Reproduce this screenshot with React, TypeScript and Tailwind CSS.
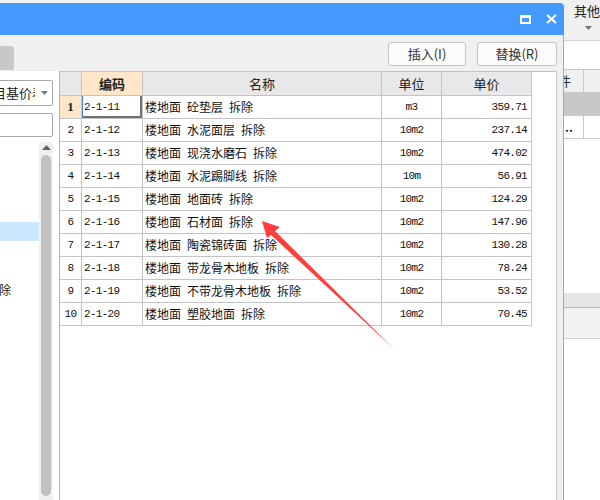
import React from 'react';

const rows = [
  ['2-1-11', '楼地面 砼垫层 拆除', 'm3', '359.71'],
  ['2-1-12', '楼地面 水泥面层 拆除', '10m2', '237.14'],
  ['2-1-13', '楼地面 现浇水磨石 拆除', '10m2', '474.02'],
  ['2-1-14', '楼地面 水泥踢脚线 拆除', '10m', '56.91'],
  ['2-1-15', '楼地面 地面砖 拆除', '10m2', '124.29'],
  ['2-1-16', '楼地面 石材面 拆除', '10m2', '147.96'],
  ['2-1-17', '楼地面 陶瓷锦砖面 拆除', '10m2', '130.28'],
  ['2-1-18', '楼地面 带龙骨木地板 拆除', '10m2', '78.24'],
  ['2-1-19', '楼地面 不带龙骨木地板 拆除', '10m2', '53.52'],
  ['2-1-20', '楼地面 塑胶地面 拆除', '10m2', '70.45'],
];

const cols = 'grid grid-cols-[22px_61px_239px_60px_90px] w-[472px]';
const cell = 'border-r border-b border-[#c4c4c4] flex items-center overflow-hidden whitespace-nowrap';
const mono = "font-['Liberation_Mono',monospace] text-[11px] tracking-[-0.7px] text-[#111]";

function Caret() {
  return (
    <svg width="7" height="4" viewBox="0 0 7 4">
      <path d="M0 0h7L3.5 4z" fill="#777" />
    </svg>
  );
}

export default function App() {
  return (
    <div className="relative w-[600px] h-[500px] overflow-hidden flex bg-[#f0f0f0] font-['Noto_Sans_CJK_SC',sans-serif] text-[#222]">
      {/* Dialog */}
      <div className="w-[567px] flex flex-col">
        <div className="h-[3px] bg-[#f0f0f0]" />
        {/* Title bar */}
        <div className="h-[32px] bg-[#4499ff] rounded-tr-[4px] flex justify-end items-center gap-[15px] pr-[7px]">
          <svg width="11" height="9" viewBox="0 0 11 9">
            <rect x="1" y="1.5" width="9" height="6.5" fill="none" stroke="#fff" strokeWidth="2" />
            <rect x="0" y="0" width="11" height="3" fill="#fff" />
          </svg>
          <svg width="11" height="10" viewBox="0 0 11 10">
            <path d="M1 1l9 8M10 1l-9 8" stroke="#fff" strokeWidth="2.2" />
          </svg>
        </div>

        {/* Body */}
        <div className="flex-1 flex bg-[#f0f0f0] border-r border-[#a8a8a8]">
          <div className="w-[557px] flex flex-col">
            {/* Toolbar */}
            <div className="h-[36px] flex">
              <div className="w-[14px] h-[24px] mt-[11px] bg-[#c8c8c8] rounded-tr-[3px]" />
              <div className="ml-auto flex gap-[11px] pt-[7px]">
                <button className="w-[78px] h-[24px] bg-[#fbfbfb] border border-[#c4c4c4] rounded-[3px] text-[13px] text-[#333]">
                  插入(I)
                </button>
                <button className="w-[80px] h-[24px] bg-[#fbfbfb] border border-[#c4c4c4] rounded-[3px] text-[13px] text-[#333]">
                  替换(R)
                </button>
              </div>
            </div>

            {/* Main */}
            <div className="flex-1 flex min-h-0">
              {/* Left panel */}
              <div className="w-[60px] bg-white border-r border-[#b4b4b4] flex flex-col pt-[9px] overflow-hidden">
                <div className="-ml-[10px] w-[63px] h-[26px] shrink-0 border border-[#a8a8a8] rounded-[2px] flex items-center">
                  <div className="w-[44px] overflow-hidden whitespace-nowrap text-[13px] leading-[24px]">
                    <span className="ml-[2px]">目基价表</span>
                  </div>
                  <div className="flex-1 flex justify-center pl-[2px]">
                    <Caret />
                  </div>
                </div>
                <div className="-ml-[10px] w-[63px] h-[24px] shrink-0 mt-[7px] border border-[#a8a8a8] rounded-[2px]" />
                <div className="flex-1 flex mt-[5px]">
                  <div className="w-[39px] flex flex-col overflow-hidden">
                    <div className="h-[19px] mt-[80px] bg-[#cce8ff]" />
                    <div className="h-[20px] mt-[39px] flex items-center text-[12px] whitespace-nowrap">
                      <span className="-ml-[13px]">拆除</span>
                    </div>
                  </div>
                  <div className="w-[14px] bg-[#f0f0f0] flex flex-col items-center">
                    <svg width="9" height="5" viewBox="0 0 9 5" className="mt-[3px]">
                      <path d="M0 5h9L4.5 0z" fill="#606060" />
                    </svg>
                    <div className="w-[10px] flex-1 mt-[5px] mb-[4px] rounded-full bg-[#c0c0c0]" />
                  </div>
                </div>
              </div>

              {/* Table panel */}
              <div className="flex-1 bg-white border-r border-[#c8c8c8]">
                <div className="border-t border-[#c4c4c4]">
                  <div className={`${cols} h-[24px] text-[13px]`}>
                    <div className={`${cell} bg-[#e8e8e8]`} />
                    <div className={`${cell} bg-[#ffe6c8] justify-center font-bold`}>编码</div>
                    <div className={`${cell} bg-[#e8e8e8] justify-center`}>名称</div>
                    <div className={`${cell} bg-[#e8e8e8] justify-center`}>单位</div>
                    <div className={`${cell} bg-[#e8e8e8] justify-center`}>单价</div>
                  </div>
                  {rows.map((r, i) => (
                    <div key={r[0]} className={`${cols} h-[23px]`}>
                      <div
                        className={`${cell} justify-center ${i === 0 ? "bg-[#ffe6c8] font-['Liberation_Serif',serif] font-bold text-[13px]" : mono}`}
                      >
                        {i + 1}
                      </div>
                      <div
                        className={`${cell} ${mono} pl-[2px] ${i === 0 ? 'shadow-[inset_1px_0_0_#3c8ce6,inset_-2px_-2px_0_#707070]' : ''}`}
                      >
                        {r[0]}
                      </div>
                      <div className={`${cell} pl-[2px] text-[12px] text-[#111]`}>
                        {r[1].split(' ').join('\u2002')}
                      </div>
                      <div className={`${cell} ${mono} justify-center`}>{r[2]}</div>
                      <div className={`${cell} ${mono} justify-end pr-[4px]`}>{r[3]}</div>
                    </div>
                  ))}
                </div>
              </div>
            </div>
          </div>
          <div className="flex-1" />
        </div>
      </div>

      {/* Right side of the main window */}
      <div className="flex-1 flex flex-col bg-white">
        <div className="h-[41px] bg-[#f0f0f0] border-b border-[#d4d4d4] flex flex-col pl-[10px] pt-[3px]">
          <div className="text-[13px] leading-[16px] whitespace-nowrap">其他</div>
          <div className="ml-[11px] mt-[7px] flex">
            <Caret />
          </div>
        </div>
        <div className="h-[28px]" />
        <div className="h-[24px] flex bg-[#f0f0f0] border-y border-[#c8c8c8]">
          <div className="w-[20px] border-r border-[#c8c8c8] overflow-hidden whitespace-nowrap text-[13px] leading-[22px]">
            <span className="-ml-[6px]">件</span>
          </div>
        </div>
        <div className="h-[23px] bg-[#c8c8c8]" />
        <div className="h-[23px] flex border-b border-[#c8c8c8]">
          <div className="w-[20px] border-r border-[#c8c8c8] text-[12px] font-bold leading-[22px] pl-[1px]">..</div>
        </div>
        <div className="h-[154px]" />
        <div className="h-[15px] bg-[#e6e6e6] border-b border-[#b8b8b8]" />
        <div className="h-[31px] bg-[#f2f2f2] border-b border-[#d0d0d0]" />
      </div>

      {/* Red arrow annotation */}
      <svg className="absolute inset-0 pointer-events-none" width="600" height="500" viewBox="0 0 600 500">
        <polygon
          points="262,221 280,227 275,231 394,349 271,235 267,238"
          fill="#ff3d3d"
        />
      </svg>
    </div>
  );
}
